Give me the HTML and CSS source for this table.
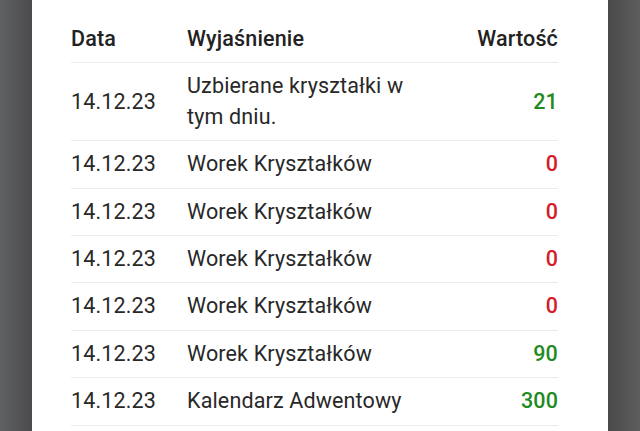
FILE: index.html
```html
<!DOCTYPE html>
<html lang="pl">
<head>
<meta charset="utf-8">
<title>Historia kryształków</title>
<link rel="stylesheet" href="styles.css">
</head>
<body>
<div class="sheet">
  <table class="log">
    <colgroup>
      <col class="c-date">
      <col class="c-desc">
      <col class="c-val">
    </colgroup>
    <thead>
      <tr><th>Data</th><th>Wyjaśnienie</th><th class="num">Wartość</th></tr>
    </thead>
    <tbody>
      <tr><td>14.12.23</td><td>Uzbierane kryształki w tym dniu.</td><td class="num pos">21</td></tr>
      <tr><td>14.12.23</td><td>Worek Kryształków</td><td class="num neg">0</td></tr>
      <tr><td>14.12.23</td><td>Worek Kryształków</td><td class="num neg">0</td></tr>
      <tr><td>14.12.23</td><td>Worek Kryształków</td><td class="num neg">0</td></tr>
      <tr><td>14.12.23</td><td>Worek Kryształków</td><td class="num neg">0</td></tr>
      <tr><td>14.12.23</td><td>Worek Kryształków</td><td class="num pos">90</td></tr>
      <tr><td>14.12.23</td><td>Kalendarz Adwentowy</td><td class="num pos">300</td></tr>
    </tbody>
  </table>
</div>
</body>
</html>
```
FILE: styles.css
```css
html, body {
  margin: 0;
  height: 100%;
  overflow: hidden;
}
body {
  background: linear-gradient(to right,
    #606164 0px, #4a4a4b 32px, #4a4a4b 608px, #5d5d5e 640px);
  font-family: Roboto, "Noto Sans", sans-serif;
  color: #222222;
}
.sheet {
  margin: 0 32px;
  min-height: 100%;
  background: #ffffff;
  padding: 16px 50px 0 39px;
  box-sizing: border-box;
}
.log {
  width: 487px;
  border-collapse: collapse;
  table-layout: fixed;
  font-size: 21.5px;
  line-height: 30.4px;
  letter-spacing: 0.15px;
}
.c-date { width: 116px; }
.c-desc { width: 240px; }
.c-val { width: 131px; }
.log th, .log td {
  padding: 8px 0;
  text-align: left;
  vertical-align: middle;
  border-bottom: 1px solid #ebebeb;
}
.log th {
  font-weight: 500;
  color: #222222;
}
.log td {
  font-weight: 400;
  color: #282828;
}
.log .num {
  text-align: right;
}
.log td.num {
  font-weight: 500;
}
.log td.pos { color: #238a22; }
.log td.neg { color: #d41c2a; }
```
